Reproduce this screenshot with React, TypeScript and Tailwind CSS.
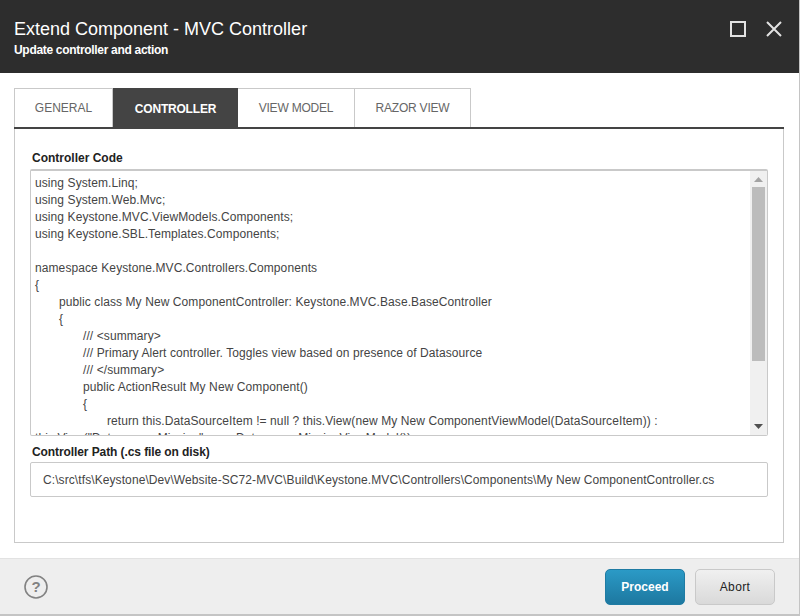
// Extend Component dialog

const codeLines = `using System.Linq;
using System.Web.Mvc;
using Keystone.MVC.ViewModels.Components;
using Keystone.SBL.Templates.Components;

namespace Keystone.MVC.Controllers.Components
{
	public class My New ComponentController: Keystone.MVC.Base.BaseController
	{
		/// <summary>
		/// Primary Alert controller. Toggles view based on presence of Datasource
		/// </summary>
		public ActionResult My New Component()
		{
			return this.DataSourceItem != null ? this.View(new My New ComponentViewModel(DataSourceItem)) :
this.View("Datasource Missing", new DatasourceMissingViewModel());`

const tabs = [
    { name: "GENERAL", size: "w-[99px] border-l" },
    { name: "CONTROLLER", size: "w-[125px] tracking-[-0.2px]" },
    { name: "VIEW MODEL", size: "w-[117px] tracking-[-0.2px]" },
    { name: "RAZOR VIEW", size: "w-[116px] tracking-[-0.2px]" },
]

export default function App() {
    return (
        <div className="w-[800px] h-[616px] flex flex-col bg-white border-r border-b-2 border-[#c4c4c4] font-['Liberation_Sans',Arial,sans-serif] overflow-hidden">
            {/* 헤더 */}
            <header className="h-[73px] shrink-0 bg-[#2d2d2d] flex items-start justify-between pl-[14px] pr-[17px]">
                <div className="text-white">
                    <h1 className="text-[18px] leading-[22px] mt-[18px]">Extend Component - MVC Controller</h1>
                    <p className="text-[12px] leading-[16px] mt-[2px] font-bold tracking-[-0.31px]">Update controller and action</p>
                </div>
                <div className="flex items-center gap-[20px] mt-[21px]">
                    <span className="block w-[16px] h-[16px] border-2 border-[#e2e2e2]" />
                    <svg width="16" height="16" viewBox="0 0 16 16" className="text-[#e2e2e2]">
                        <path d="M1 1L15 15M15 1L1 15" stroke="currentColor" strokeWidth="2" />
                    </svg>
                </div>
            </header>

            <main className="flex-1 flex flex-col pl-[14px] pr-[15px] pt-[15px]">
                {/* 탭 */}
                <div className="flex h-[41px] shrink-0 border-b-[2px] border-[#444]">
                    {tabs.map((tab) => (
                        tab.name === "CONTROLLER"
                            ? <div key={tab.name} className={`${tab.size} bg-[#444] text-white font-bold text-[12px] flex items-center justify-center h-[41px]`}>{tab.name}</div>
                            : <div key={tab.name} className={`${tab.size} border-t border-r border-[#c9c9c9] text-[#666] text-[12px] flex items-center justify-center h-[39px]`}>{tab.name}</div>
                    ))}
                </div>

                {/* 탭 패널 */}
                <div className="h-[414px] shrink-0 border-x border-b border-[#c9c9c9] px-[15px] pt-[21px]">
                    <label className="block ml-[2px] text-[12px] leading-[16px] font-bold text-[#222]">Controller Code</label>
                    <div className="mt-[3px] h-[267px] flex border border-[#c9c9c9] rounded-[2px] border-t-2 overflow-hidden">
                        <pre className="flex-1 min-w-0 overflow-hidden whitespace-pre-wrap [tab-size:24px] px-[4px] pt-[4px] font-['Liberation_Sans',Arial,sans-serif] text-[12px] leading-[17px] tracking-[0.09px] text-[#444]">{codeLines}</pre>
                        <div className="w-[17px] shrink-0 bg-[#f0f0f0] flex flex-col items-center">
                            <svg width="9" height="5" viewBox="0 0 9 5" className="mt-[6px] shrink-0">
                                <path d="M4.5 0L9 5H0Z" fill="#a3a3a3" />
                            </svg>
                            <div className="w-[13px] h-[174px] mt-[5px] bg-[#bcbcbc]" />
                            <div className="flex-1" />
                            <svg width="9" height="5" viewBox="0 0 9 5" className="mb-[6px] shrink-0">
                                <path d="M0 0H9L4.5 5Z" fill="#505050" />
                            </svg>
                        </div>
                    </div>
                    <label className="block ml-[2px] text-[12px] leading-[16px] font-bold text-[#222] tracking-[-0.09px] mt-[8px]">Controller Path (.cs file on disk)</label>
                    <div className="mt-[2px] h-[35px] border border-[#c9c9c9] rounded-[2px] flex items-center pl-[12px] text-[12px] tracking-[0.09px] text-[#444]">
                        {"C:\\src\\tfs\\Keystone\\Dev\\Website-SC72-MVC\\Build\\Keystone.MVC\\Controllers\\Components\\My New ComponentController.cs"}
                    </div>
                </div>
            </main>

            {/* 푸터 */}
            <footer className="h-[56px] shrink-0 bg-[#eeeeee] border-t border-[#e2e2e2] flex items-center justify-between pl-[24px] pr-[24px]">
                <svg width="24" height="24" viewBox="0 0 24 24" className="mt-[1px]">
                    <circle cx="12" cy="12" r="11" fill="none" stroke="#828282" strokeWidth="1.6" />
                    <text x="12" y="17" textAnchor="middle" fontSize="15" fontWeight="700" fill="#828282" fontFamily="Liberation Sans, Arial, sans-serif">?</text>
                </svg>
                <div className="flex gap-[10px]">
                    <button className="w-[80px] h-[36px] rounded-[5px] bg-gradient-to-b from-[#2b9ac6] to-[#1d78a0] border border-[#1f7ba3] text-white font-bold text-[12px]">Proceed</button>
                    <button className="w-[80px] h-[36px] rounded-[5px] bg-gradient-to-b from-[#f0f0f0] to-[#d9d9d9] border border-[#c9c9c9] text-[#222] text-[12px] tracking-[0.4px]">Abort</button>
                </div>
            </footer>
        </div>
    )
}
